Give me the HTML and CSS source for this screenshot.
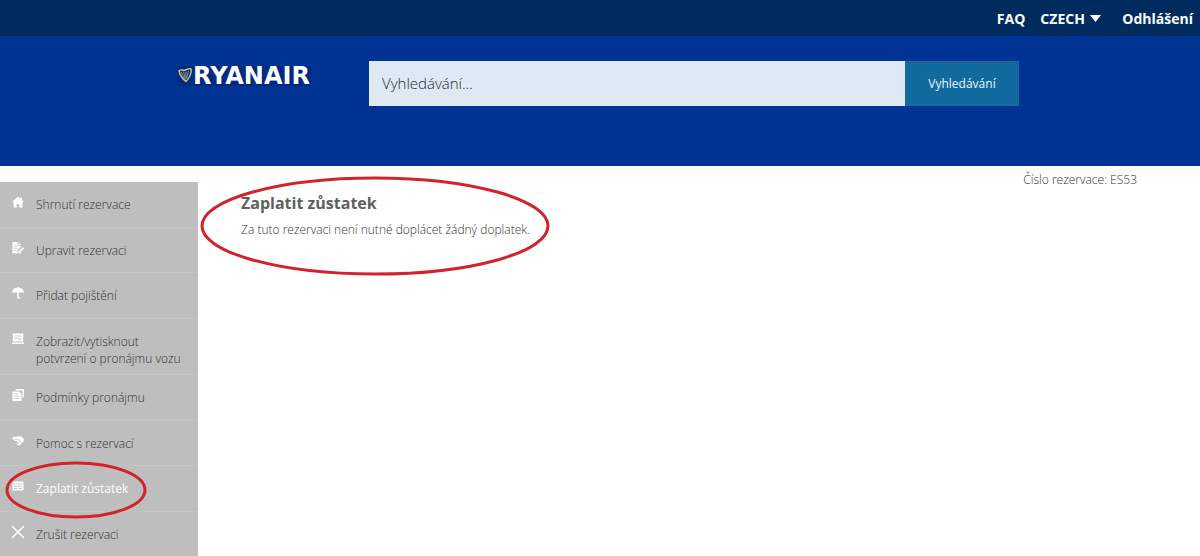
FILE: index.html
```
<!DOCTYPE html>
<html lang="cs">

<head>
    <meta charset="UTF-8">
    <meta name="viewport" content="width=device-width, initial-scale=1.0">
    <title>Zaplatit zůstatek</title>
    <link rel="stylesheet" href="styles.css">
</head>

<body>
    <nav class="topbar">
        <a href="#">FAQ</a>
        <div class="language">
            <select class="language-select" aria-label="Jazyk">
                <option>CZECH</option>
            </select>
            <svg class="language-arrow" viewBox="0 0 11 7" aria-hidden="true"><path d="M0 0h11L5.500 7z"/></svg>
        </div>
        <a href="#">Odhlášení</a>
    </nav>

    <header class="header">
        <a class="logo" href="#">
            <svg class="logo-harp" viewBox="0 0 16 18" aria-hidden="true">
                <path d="M2 4C4 1.500 6 4 8.500 3s3.500-2 5.500-1c.8 3.500-1 8-5 12.500C5.500 12 3 8 2 4z" fill="none" stroke="#d3c27a" stroke-width="1.400"/>
                <path d="M4 4.500l4 9M6.500 4.500l2 8M9 4.500v7M11.500 4l-2 7M2 7l5 5" fill="none" stroke="#b5ad83" stroke-width=".8"/>
            </svg>
            <span>RYANAIR</span>
        </a>
        <form class="search">
            <input class="search-input" type="text" placeholder="Vyhledávání..." aria-label="Vyhledávání">
            <button class="search-button" type="submit">Vyhledávání</button>
        </form>
    </header>

    <div class="page">
        <ul class="menu">
            <li class="menu-item">
                <a href="#">
                    <svg class="icon" viewBox="0 0 12 12" aria-hidden="true"><path d="M6 .5L0 6h1.500v5.500h3.200V8h2.600v3.500h3.200V6H12l-2-1.900V1.500H8.500v1.300z"/></svg>
                    <span>Shrnutí rezervace</span>
                </a>
            </li>
            <li class="menu-item">
                <a href="#">
                    <svg class="icon" viewBox="0 0 12 12" aria-hidden="true"><path d="M.5 0H6l3 3v1.500L5.500 8v3.500h-5z"/><path d="M6.500 11.500V9l4-4L12 6.500l-4 4h1v1z"/><path class="icon-cut" d="M2 4h3M2 6.300h4M2 8.600h2.500M6 .5v3h3M6 9.500l4-4"/></svg>
                    <span>Upravit rezervaci</span>
                </a>
            </li>
            <li class="menu-item">
                <a href="#">
                    <svg class="icon" viewBox="0 0 12 12" aria-hidden="true"><path d="M0 5.500C.3 2.300 2.700.7 5.500.5V0h1v.5c2.800.2 5.200 1.800 5.500 5z"/><path class="icon-line" d="M6 5v5q0 1.200 1.800 1"/></svg>
                    <span>Přidat pojištění</span>
                </a>
            </li>
            <li class="menu-item">
                <a href="#">
                    <svg class="icon" viewBox="0 0 12 12" aria-hidden="true"><path d="M.8.500h10.400v8H.8zM0 9.500h12v1.500H0z"/><path class="icon-cut" d="M2.500 3h7M2.500 5.300h5M6.500 7.200l1.500-1 1.500 1"/></svg>
                    <span>Zobrazit/vytisknout potvrzení o pronájmu vozu</span>
                </a>
            </li>
            <li class="menu-item">
                <a href="#">
                    <svg class="icon" viewBox="0 0 12 12" aria-hidden="true"><path d="M3.500 0H12v8.500h-1.500v-7h-7z"/><path d="M.5 2.500h6.500l2.500 2.500v7h-9z"/><path class="icon-cut" d="M2.300 5h4M2.300 7.200h5M2.300 9.400h5"/></svg>
                    <span>Podmínky pronájmu</span>
                </a>
            </li>
            <li class="menu-item">
                <a href="#">
                    <svg class="icon" viewBox="0 0 12 12" aria-hidden="true"><path d="M0 3l2-1.500 2 .5 2-.8 3.500.3L12 4.500 11 7 8 10 6 10.500 4.500 9 6 7.500 4.500 6 2.500 6z"/><path class="icon-cut" d="M2 5l2-1 2 .5 2 1.500 1.500 2M5.500 9L7 7.500"/></svg>
                    <span>Pomoc s rezervací</span>
                </a>
            </li>
            <li class="menu-item active">
                <a href="#">
                    <svg class="icon" viewBox="0 0 12 12" aria-hidden="true"><path d="M.5 1.500h11v9H.5z"/><path class="icon-cut" d="M1.500 4h9M2 6.300h8M2 8.500h3M6.500 8.500H10"/></svg>
                    <span>Zaplatit zůstatek</span>
                </a>
                <svg class="ring ring-menu" viewBox="0 0 142 58" aria-hidden="true"><ellipse cx="71" cy="29" rx="69" ry="27"/></svg>
            </li>
            <li class="menu-item">
                <a href="#">
                    <svg class="icon icon-close" viewBox="0 0 12 12" aria-hidden="true"><path class="icon-line" d="M0 0l12 12M12 0L0 12"/></svg>
                    <span>Zrušit rezervaci</span>
                </a>
            </li>
        </ul>

        <main class="content">
            <h1>Zaplatit zůstatek</h1>
            <p>Za tuto rezervaci není nutné doplácet žádný doplatek.</p>
            <svg class="ring ring-content" viewBox="0 0 350 100" aria-hidden="true"><ellipse cx="175" cy="50" rx="173" ry="48"/></svg>
        </main>

        <p class="reservation">Číslo rezervace: ES53</p>
    </div>
</body>

</html>
```
FILE: styles.css
```
* {
    box-sizing: border-box;
}

body {
    display: flex;
    flex-direction: column;
    min-height: 100vh;
    margin: 0;
    background: #fff;
    color: #333;
    font-family: 'Open Sans', Arial, sans-serif;
    font-size: 12px;
    font-weight: 300;
    line-height: 17px;
}

a {
    color: inherit;
    text-decoration: none;
}

h1,
p {
    margin: 0;
}

.topbar {
    display: flex;
    justify-content: flex-end;
    align-items: center;
    gap: 15px;
    height: 36px;
    padding: 0 7px;
    background: #002b5f;
    color: #fff;
    font-size: 14px;
    font-weight: bold;
}

.language {
    display: flex;
    align-items: center;
    gap: 5px;
    margin-right: 6px;
}

.language-select {
    appearance: none;
    padding: 0;
    border: 0;
    background: none;
    color: inherit;
    font: inherit;
}

.language-arrow {
    width: 11px;
    height: 7px;
    fill: #fff;
}

.header {
    display: flex;
    align-items: flex-start;
    gap: 58px;
    padding: 25px 181px 60px 177px;
    background: #003394;
}

.logo {
    display: flex;
    align-items: center;
    width: 134px;
    height: 20px;
    margin-top: 5px;
    background: #002a80;
    color: #fff;
    font-family: 'DejaVu Sans', Verdana, sans-serif;
    font-size: 24px;
    font-weight: bold;
}

.logo-harp {
    flex: none;
    width: 16px;
    height: 18px;
}

.search {
    display: flex;
    flex: 1;
    height: 45px;
}

.search-input {
    flex: 1;
    min-width: 0;
    padding: 0 13px;
    border: 0;
    border-radius: 0;
    background: #dfe9f3;
    color: #333;
    font: inherit;
    font-size: 15px;
}

.search-input::placeholder {
    color: #222a32;
}

.search-button {
    width: 114px;
    padding: 0;
    border: 0;
    background: #126a9e;
    color: #e6f8ff;
    font: inherit;
    font-weight: 400;
}

.page {
    display: flex;
    flex: 1;
}

.menu {
    display: flex;
    flex-direction: column;
    width: 198px;
    margin: 16px 0 0;
    padding: 0;
    background: #bebebe;
    list-style-type: none;
}

.menu-item {
    position: relative;
    flex: 1 0 auto;
    border-bottom: 1px solid #c4c4c4;
}

.menu-item:last-child {
    border-bottom: 0;
}

.menu-item a {
    display: flex;
    gap: 12px;
    min-height: 44px;
    padding: 14px 8px 7px 12px;
}

.active {
    color: #fff;
    font-weight: 400;
}

.icon {
    flex: none;
    width: 12px;
    height: 12px;
    fill: #fff;
}

.icon-cut {
    fill: none;
    stroke: #bebebe;
    stroke-width: 0.8;
}

.icon-line {
    fill: none;
    stroke: #fff;
    stroke-width: 1.5;
}

.icon-close {
    overflow: visible;
}

.content {
    position: relative;
    flex: 1;
    padding: 27px 0 0 43px;
}

.content h1 {
    margin-bottom: 8px;
    color: #606060;
    font-size: 16px;
    line-height: 20px;
}

.reservation {
    padding: 5px 63px 0 0;
}

/* red marker ellipses */
.ring {
    position: absolute;
    fill: none;
    stroke: #d2232a;
    stroke-width: 3;
    pointer-events: none;
}

.ring-menu {
    top: -5px;
    left: 5px;
    width: 142px;
    height: 58px;
}

.ring-content {
    top: 10px;
    left: 2px;
    width: 350px;
    height: 100px;
}
```
